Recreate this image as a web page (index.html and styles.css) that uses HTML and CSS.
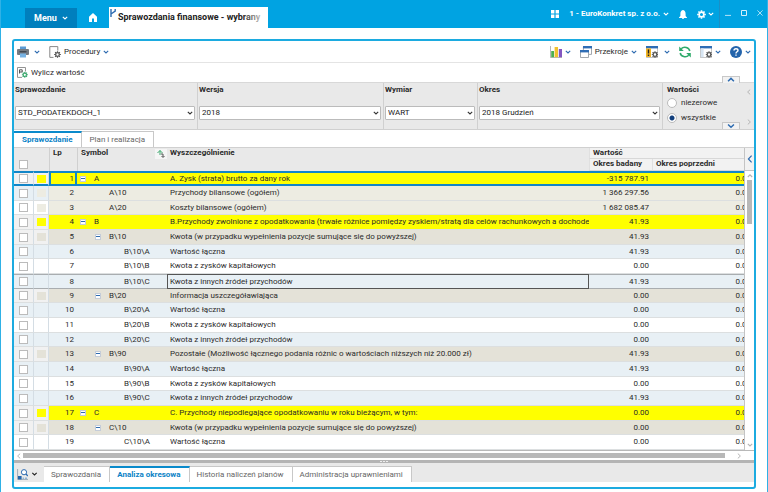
FILE: index.html
```html
<!DOCTYPE html>
<html lang="pl">
<head>
    <meta charset="UTF-8">
    <meta name="viewport" content="width=device-width, initial-scale=1.0">
    <title>Sprawozdania finansowe</title>
    <link rel="stylesheet" href="styles.css">
</head>
<body>
    <svg class="sprite" aria-hidden="true">
        <symbol id="down" viewBox="0 0 6 6"><path d="M0.8 1.8 L3 4 L5.2 1.8" fill="none" stroke="currentColor" stroke-width="1.1"/></symbol>
        <symbol id="up" viewBox="0 0 6 6"><path d="M0.8 4 L3 1.8 L5.2 4" fill="none" stroke="currentColor" stroke-width="1.1"/></symbol>
        <symbol id="left" viewBox="0 0 6 6"><path d="M4.2 0.6 L1.6 3 L4.2 5.4" fill="none" stroke="currentColor" stroke-width="1"/></symbol>
        <symbol id="right" viewBox="0 0 6 6"><path d="M1.8 0.6 L4.4 3 L1.8 5.4" fill="none" stroke="currentColor" stroke-width="1"/></symbol>
        <symbol id="gear" viewBox="0 0 10 10"><circle cx="5" cy="5" r="2.6" fill="none" stroke="currentColor" stroke-width="1.8"/><path d="M5 0.2V2M5 8V9.8M0.2 5H2M8 5H9.8M1.6 1.6L2.9 2.9M7.1 7.1L8.4 8.4M8.4 1.6L7.1 2.9M2.9 7.1L1.6 8.4" stroke="currentColor" stroke-width="1.7"/></symbol>
    </svg>

    <header class="topbar">
        <button class="menu">Menu <svg class="chev"><use href="#down"/></svg></button>
        <a class="home" href="#" aria-label="Start"><svg viewBox="0 0 8 9"><path d="M4 0L0 3.8V9H3V5.6H5V9H8V3.8Z" fill="#fff"/></svg></a>
        <a class="doc-tab" href="#">
            <svg class="pin" viewBox="0 0 6 8"><path d="M1 0V8M5.2 0V2.2L1 5" fill="none" stroke="#2d6bb0" stroke-width="1.4"/></svg>
            <span>Sprawozdania finansowe - wybrany</span>
        </a>
        <div class="account">
            <button aria-label="Aplikacje"><svg class="apps" viewBox="0 0 8 8"><path d="M0 0H3.4V3.4H0ZM4.6 0H8V3.4H4.6ZM0 4.6H3.4V8H0ZM4.6 4.6H8V8H4.6Z" fill="#fff"/></svg></button>
            <button class="company">1 - EuroKonkret sp. z o.o. <svg class="chev"><use href="#down"/></svg></button>
            <button aria-label="Powiadomienia"><svg class="bell" viewBox="0 0 8 9"><path d="M4 0C2 0.6 1.4 2 1.4 4V6L0 7.4V8H8V7.4L6.6 6V4C6.6 2 6 0.6 4 0ZM3 8.3H5V9H3Z" fill="#fff"/></svg></button>
            <button class="settings" aria-label="Ustawienia"><svg class="cog"><use href="#gear"/></svg><svg class="chev"><use href="#down"/></svg></button>
        </div>
        <div class="window-buttons">
            <button aria-label="Minimalizuj"><svg viewBox="0 0 6 6"><path d="M0 5.4H6" stroke="#b5e4f7"/></svg></button>
            <button aria-label="Maksymalizuj"><svg viewBox="0 0 6 6"><path d="M0.5 0.5H5.5V5.5H0.5Z" fill="none" stroke="#d5f0fb"/></svg></button>
            <button aria-label="Zamknij"><svg viewBox="0 0 6 6"><path d="M0.4 0.4L5.6 5.6M5.6 0.4L0.4 5.6" stroke="#b5e4f7" stroke-width="0.9"/></svg></button>
        </div>
    </header>

    <main class="panel">
        <div class="toolbar">
            <button class="print" aria-label="Drukuj">
                <svg class="icon" viewBox="0 0 12 12"><path d="M3 0.5H9V3H3Z" fill="#5d9bd3"/><rect y="3" width="12" height="6" rx="1" fill="#757b82"/><path d="M2.5 5H9.5V6.4H2.5Z" fill="#404850"/><path d="M3 7.5H9V11.5H3Z" fill="#77b2e2"/></svg>
                <svg class="chev"><use href="#down"/></svg>
            </button>
            <button class="procedures">
                <svg class="icon" viewBox="0 0 12 12"><path d="M4.5 11.4H0.8V0.6H8.8V4.6" fill="none" stroke="#888"/><use href="#gear" x="5" y="5" width="7" height="7" color="#555"/></svg>
                Procedury <svg class="chev"><use href="#down"/></svg>
            </button>
            <div class="toolbar-right">
                <button aria-label="Wykres">
                    <svg class="icon" viewBox="0 0 12 12"><path d="M0.5 0V11.5H12" fill="none" stroke="#999" stroke-width="0.7"/><path d="M1.2 5H4V11.2H1.2Z" fill="#4caf50"/><path d="M4.6 1H8V11.2H4.6Z" fill="#f2c230"/><path d="M8.8 3H12V11.2H8.8Z" fill="#8356c0"/></svg>
                    <svg class="chev"><use href="#down"/></svg>
                </button>
                <button>
                    <svg class="icon" viewBox="0 0 12 12"><path d="M3.4 4V0.8H11.5V8.4H9" fill="#fff" stroke="#8a929a" stroke-width="0.8"/><path d="M3 0H12V2.4H3Z" fill="#2f6db5"/><path d="M0.5 4.5H8.5V11.5H0.5Z" fill="#fff" stroke="#8a929a" stroke-width="0.8"/><path d="M0 4H9V6.4H0Z" fill="#2f6db5"/></svg>
                    Przekroje <svg class="chev"><use href="#down"/></svg>
                </button>
                <button class="alerts" aria-label="Alerty">
                    <svg class="icon" viewBox="0 0 12 12"><path d="M0.5 0.5H11.5V11.5H0.5Z" fill="#fff" stroke="#aaa" stroke-width="0.7"/><path d="M0 0H12V2.4H0Z" fill="#2f6db5"/><path d="M0 2.4H5V11H0Z" fill="#f0b323"/><path d="M2.5 3.5V7.5M2.5 8.5V10" stroke="#222" stroke-width="1.4"/><use href="#gear" x="5.5" y="5" width="7" height="7" color="#555"/></svg>
                    <svg class="chev"><use href="#down"/></svg>
                </button>
                <button aria-label="Odśwież">
                    <svg class="icon" viewBox="0 0 12 12"><path d="M10.8 5A5 4.6 0 0 0 2.2 2.8M1.2 7A5 4.6 0 0 0 9.8 9.2" fill="none" stroke="#2eaa6b" stroke-width="1.6"/><path d="M0.2 0.4V5H4.8ZM11.8 11.6V7H7.2Z" fill="#2eaa6b"/></svg>
                </button>
                <button aria-label="Widok">
                    <svg class="icon" viewBox="0 0 12 12"><path d="M0.5 0.5H11.5V11.5H0.5Z" fill="#fff" stroke="#aaa" stroke-width="0.7"/><path d="M0 0H12V2.4H0Z" fill="#2f6db5"/><path d="M0.8 2.4H3.6V11.2H0.8Z" fill="#d7e5f2"/><use href="#gear" x="5.5" y="5" width="7" height="7" color="#555"/></svg>
                    <svg class="chev"><use href="#down"/></svg>
                </button>
                <button aria-label="Pomoc">
                    <svg class="icon" viewBox="0 0 12 12"><circle cx="6" cy="6" r="6" fill="#2464ab"/><path d="M4 4.6C4 2 8 2.2 8 4.4C8 5.8 6 5.8 6 7.4M6 8.4V9.8" fill="none" stroke="#fff" stroke-width="1.4"/></svg>
                    <svg class="chev"><use href="#down"/></svg>
                </button>
            </div>
        </div>

        <div class="toolbar toolbar-sub">
            <button>
                <svg class="icon-s" viewBox="0 0 11 11"><path d="M5 10.4H0.5V0.5H8.5V4.5" fill="#fff" stroke="#888" stroke-width="0.9"/><path d="M2.5 6.5V2.8H5.2V5H2.5" fill="none" stroke="#555"/><use href="#gear" x="4.6" y="4.6" width="6.4" height="6.4" color="#3aa76d"/></svg>
                Wylicz wartość
            </button>
        </div>

        <form class="filters">
            <div class="field">
                <label for="report">Sprawozdanie</label>
                <div class="select"><select id="report"><option>STD_PODATEKDOCH_1</option></select><svg class="chev"><use href="#down"/></svg></div>
            </div>
            <div class="field">
                <label for="version">Wersja</label>
                <div class="select"><select id="version"><option>2018</option></select><svg class="chev"><use href="#down"/></svg></div>
            </div>
            <div class="field">
                <label for="dimension">Wymiar</label>
                <div class="select"><select id="dimension"><option>WART</option></select><svg class="chev"><use href="#down"/></svg></div>
            </div>
            <div class="field">
                <label for="period">Okres</label>
                <div class="select"><select id="period"><option>2018 Grudzień</option></select><svg class="chev"><use href="#down"/></svg></div>
            </div>
            <fieldset class="field values">
                <legend>Wartości</legend>
                <label><input type="radio" name="values"> niezerowe</label>
                <label><input type="radio" name="values" checked> wszystkie</label>
            </fieldset>
            <div class="filter-nav">
                <svg class="arrow"><use href="#left"/></svg>
                <svg class="arrow"><use href="#right"/></svg>
            </div>
            <button type="button" class="fold fold-up" aria-label="Zwiń"><svg><use href="#up"/></svg></button>
            <button type="button" class="fold fold-down" aria-label="Rozwiń"><svg><use href="#down"/></svg></button>
        </form>

        <nav class="tabs">
            <a class="tab active" href="#">Sprawozdanie</a>
            <a class="tab" href="#">Plan i realizacja</a>
        </nav>

        <div class="grid">
            <div class="grid-view">
                <table>
                    <colgroup>
                        <col class="c-check"><col class="c-mark"><col class="c-lp"><col class="c-symbol"><col class="c-name"><col class="c-now"><col class="c-prev">
                    </colgroup>
                    <thead>
                        <tr>
                            <th rowspan="2" class="low"><input type="checkbox" aria-label="Zaznacz wszystkie"></th>
                            <th rowspan="2"></th>
                            <th rowspan="2" class="line">Lp</th>
                            <th rowspan="2" class="line symbol-head">Symbol
                                <button class="sort" aria-label="Sortuj"><svg viewBox="0 0 8 8"><path d="M0.5 3L3 0.5L5.5 3M3 0.5V5" fill="none" stroke="#3aa76d"/><path d="M4 4H6V7M4.5 6L6 7.5L7.5 6" fill="none" stroke="#555"/></svg></button>
                            </th>
                            <th rowspan="2">Wyszczególnienie</th>
                            <th colspan="2" class="group">Wartość</th>
                        </tr>
                        <tr>
                            <th class="group">Okres badany</th>
                            <th class="group">Okres poprzedni</th>
                        </tr>
                    </thead>
                    <tbody id="rows"></tbody>
                </table>
            </div>
            <div class="gutter">
                <button class="expand" aria-label="Pokaż panel"><svg viewBox="0 0 6 8"><path d="M4.6 0.6L1.4 4L4.6 7.4" fill="none" stroke="#2d6bb0" stroke-width="1.2"/></svg></button>
                <div class="vscroll">
                    <svg class="arrow"><use href="#up"/></svg>
                    <div class="vthumb"></div>
                    <svg class="arrow"><use href="#down"/></svg>
                </div>
            </div>
        </div>
        <div class="hscroll">
            <svg class="arrow"><use href="#left"/></svg>
            <div class="hthumb"></div>
            <svg class="arrow"><use href="#right"/></svg>
        </div>
        <div class="splitter"><i></i><i></i><i></i></div>

        <nav class="sheets">
            <button class="find" aria-label="Znajdź">
                <svg class="icon-s" viewBox="0 0 11 11"><path d="M0.6 0V10.4H11" fill="none" stroke="#8a9aa8" stroke-width="0.8"/><path d="M1 7H4.6V10.4H1Z" fill="#2464ab"/><path d="M5.6 8.4H7V10H5.6ZM8 8.4H10V10H8Z" fill="#8fb3d6"/><circle cx="7" cy="3.2" r="2.6" fill="#fff" stroke="#2d6bb0"/><path d="M9 5L10.8 7" stroke="#2d6bb0" stroke-width="1.2"/></svg>
                <svg class="chev"><use href="#down"/></svg>
            </button>
            <a class="tab" href="#">Sprawozdania</a>
            <a class="tab active" href="#">Analiza okresowa</a>
            <a class="tab" href="#">Historia naliczeń planów</a>
            <a class="tab" href="#">Administracja uprawnieniami</a>
        </nav>
    </main>
    <script src="script.js"></script>
</body>
</html>
```
FILE: styles.css
```css
* {
    box-sizing: border-box;
}
body {
    margin: 0;
    height: 100vh;
    display: flex;
    flex-direction: column;
    overflow: hidden;
    font: 8px/10px Roboto, sans-serif;
    color: #2b2b2b;
    background: #fff;
    border-left: 1px solid #2fb1e6;
    border-right: 1px solid #2fb1e6;
}
button {
    display: flex;
    align-items: center;
    padding: 0;
    border: 0;
    background: none;
    font: inherit;
    color: inherit;
    cursor: pointer;
}
a {
    color: inherit;
    text-decoration: none;
}
.sprite {
    position: absolute;
    width: 0;
    height: 0;
}
.chev {
    width: 6px;
    height: 6px;
    color: #2d6bb0;
}
.arrow {
    width: 6px;
    height: 6px;
    color: #b5b5b5;
}
.icon {
    width: 12px;
    height: 12px;
}
.icon-s {
    width: 11px;
    height: 11px;
}

/* top bar */
.topbar {
    display: flex;
    flex: none;
    height: 28px;
    padding-left: 24px;
    background: #00a3e2;
    color: #fff;
    font-weight: bold;
}
.topbar .chev {
    color: #fff;
}
.menu {
    width: 52px;
    margin-top: 8px;
    justify-content: center;
    gap: 5px;
    background: #007fbd;
    font-size: 9px;
}
.home {
    width: 32px;
    padding: 13px 0 0 12px;
}
.home svg {
    display: block;
    width: 8px;
    height: 9px;
}
.doc-tab {
    position: relative;
    width: 159px;
    margin-top: 7px;
    padding: 5px 0 0 9px;
    background: #fff;
    color: #222;
    font-size: 9px;
}
.doc-tab span {
    display: block;
    white-space: nowrap;
}
.doc-tab span::after {
    content: "";
    position: absolute;
    top: 4px;
    left: 134px;
    width: 24px;
    height: 12px;
    background: linear-gradient(to right, rgba(255, 255, 255, 0), #fff);
}
.pin {
    position: absolute;
    top: 2px;
    left: 1px;
    width: 6px;
    height: 8px;
}
.account {
    display: flex;
    margin-left: auto;
    padding-right: 5px;
    gap: 10px;
}
.company {
    gap: 3px;
}
.apps {
    width: 8px;
    height: 8px;
}
.bell {
    width: 8px;
    height: 9px;
}
.settings {
    gap: 2px;
}
.cog {
    width: 9px;
    height: 9px;
}
.window-buttons {
    display: flex;
    gap: 10px;
    padding: 0 4px 2px 5px;
    border-left: 1px solid #1b8fc6;
}
.window-buttons svg {
    width: 6px;
    height: 6px;
}

/* panel */
.panel {
    flex: 1;
    min-height: 0;
    display: flex;
    flex-direction: column;
    margin: 11px 11px 3px;
    padding-bottom: 5px;
    border: 2px solid #1cabe0;
    border-radius: 3px;
}
.toolbar {
    display: flex;
    flex: none;
    align-items: center;
    height: 22px;
    padding: 0 3px;
    border-bottom: 1px solid #e4e4e4;
}
.toolbar button {
    gap: 3px;
}
.toolbar .print {
    gap: 5px;
    margin-right: 9px;
}
.toolbar-right {
    display: flex;
    margin-left: auto;
    gap: 9px;
}
.toolbar .alerts {
    gap: 6px;
}
.toolbar-sub {
    height: 19px;
    border-bottom: 0;
}

/* filters */
.filters {
    position: relative;
    display: grid;
    grid-template-columns: 184fr 186fr 94fr 185fr 80px 11px;
    flex: none;
    height: 48px;
    background: #e9e9e9;
    border-top: 1px solid #d8d8d8;
    border-bottom: 1px solid #d0d0d0;
}
.field {
    min-width: 0;
    margin: 0;
    padding: 2px 2px 0 1px;
    border: 0;
    border-right: 1px solid #d0d0d0;
}
.field > label,
.field legend {
    display: block;
    padding: 0;
    font-weight: bold;
}
.field > .select {
    margin-top: 11px;
}
.select {
    position: relative;
}
.select select {
    width: 100%;
    height: 14px;
    padding: 0 12px 0 2px;
    border: 1px solid #bbb;
    border-radius: 1px;
    background: #fff;
    color: #222;
    font: inherit;
    appearance: none;
}
.select .chev {
    position: absolute;
    top: 4px;
    right: 2px;
    color: #333;
    pointer-events: none;
}
.field.values {
    padding: 0 0 0 4px;
    border-right: 0;
}
.field.values legend {
    padding-top: 2px;
}
.field.values label {
    display: flex;
    align-items: center;
    gap: 4px;
    height: 15px;
    font-weight: normal;
}
input[type="radio"] {
    appearance: none;
    width: 10px;
    height: 10px;
    margin: 0;
    border: 1px solid #bbb;
    border-radius: 50%;
    background: #fff;
}
input[type="radio"]:checked {
    background: radial-gradient(circle, #123f7c 2px, #fff 3px);
}
.filter-nav {
    display: flex;
    flex-direction: column;
    justify-content: space-between;
    padding: 6px 0 4px 3px;
}
.fold {
    position: absolute;
    right: 14px;
    justify-content: center;
    width: 18px;
    height: 7px;
    border: 1px solid #c8c8c8;
    border-bottom: 0;
    background: #f2f2f2;
}
.fold svg {
    width: 8px;
    height: 8px;
    color: #2d6bb0;
}
.fold-up {
    top: -7px;
}
.fold-down {
    bottom: 0;
}

/* tabs */
.tabs {
    display: flex;
    flex: none;
    height: 17px;
    padding-top: 1px;
}
.tab {
    padding: 3px 8px 0;
    border: 1px solid #c8c8c8;
    border-left: 0;
    border-bottom: 0;
    background: #fff;
    color: #666;
}
.tab.active {
    padding-top: 2px;
    border-top: 2px solid #0a8acb;
    color: #0a82c6;
    font-weight: bold;
}

/* grid */
.grid {
    flex: 1;
    display: flex;
    min-height: 0;
    border-top: 1px solid #d0d0d0;
    border-bottom: 1px solid #b8b8b8;
}
.grid-view {
    flex: 1;
    overflow: hidden;
    min-width: 0;
    background: #e8f0f5;
}
table {
    width: calc(100% + 14px);
    table-layout: fixed;
    border-collapse: separate;
    border-spacing: 0;
}
.c-check { width: 20px; }
.c-mark { width: 15px; }
.c-lp { width: 28px; }
.c-symbol { width: 90px; }
.c-now { width: 63px; }
.c-prev { width: 106px; }
th {
    height: 11px;
    padding: 0 3px;
    background: #e9e9e9;
    text-align: left;
    vertical-align: top;
}
thead tr:last-child th {
    height: 12px;
}
th.line {
    border-left: 1px solid #d0d0d0;
}
th.group {
    background: #f2f2f2;
    border-left: 1px solid #e0e0e0;
    border-bottom: 1px solid #d8d8d8;
}
th.low {
    padding-bottom: 2px;
    vertical-align: bottom;
}
.symbol-head {
    position: relative;
}
.sort {
    position: absolute;
    right: 0;
    top: 1px;
    width: 12px;
    height: 10px;
    justify-content: center;
    background: #f5f5f5;
}
.sort svg {
    width: 8px;
    height: 8px;
}
input[type="checkbox"] {
    appearance: none;
    display: block;
    width: 9px;
    height: 9px;
    margin: 0 0 0 2px;
    border: 1px solid #bbb;
    background: #fff;
}
td {
    height: 15px;
    padding: 0 3px;
    border-bottom: 1px solid #dcdfe0;
    white-space: nowrap;
    overflow: hidden;
}
tbody tr:nth-child(3n) td {
    height: 14px;
}
tr.odd {
    background: #fff;
}
tr.even {
    background: #e8f0f5;
}
td:nth-child(1),
td:nth-child(2) {
    border-right: 1px solid #d4dde4;
}
tr.head td {
    background: #ff0;
}
tr.sub td {
    background: #e4e2d8;
}
tr.head td:nth-child(-n+2),
tr.sub td:nth-child(-n+2) {
    background: #f1f1f1;
}
tr.leaf td:nth-child(n+3) {
    background: #edece2;
}
.num {
    text-align: right;
}
td.num.prev {
    padding-right: 7px;
}
.mark {
    display: block;
    width: 9px;
    height: 8px;
}
.head .mark { background: #ff0; }
.sub .mark { background: #e4e2d8; }
.leaf .mark { background: #edece2; }
.symbol {
    display: flex;
    align-items: center;
}
.box {
    position: relative;
    flex: none;
    width: 6px;
    height: 6px;
    margin-right: 8px;
    border: 1px solid #c4ccd8;
    background: #fff;
}
.box::after {
    content: "";
    position: absolute;
    top: 1px;
    left: 0;
    width: 4px;
    height: 1px;
    background: #2d6bb0;
}
.l1 { padding-left: 15px; }
.l2 { padding-left: 29px; }
.l3 { padding-left: 44px; }
.l1.open { padding-left: 0; }
.l2.open { padding-left: 15px; }
tr.current td {
    border-top: 2px solid #1286c8;
    border-bottom: 2px solid #1286c8;
}
tr.current td:nth-child(3) {
    outline: 2px solid #1286c8;
    outline-offset: -2px;
}
tr.focus td {
    border-top: 1px solid #a9adb0;
    border-bottom: 1px solid #a9adb0;
}
tr.focus td:nth-child(5) {
    outline: 1px solid #555;
    outline-offset: -1px;
}

.gutter {
    display: flex;
    flex-direction: column;
    width: 10px;
    border-left: 1px solid #c4c4c4;
}
.expand {
    flex: none;
    justify-content: center;
    height: 23px;
    background: #f2f2f2;
    border-bottom: 1px solid #c4c4c4;
}
.expand svg {
    width: 6px;
    height: 8px;
}
.vscroll {
    flex: 1;
    display: flex;
    flex-direction: column;
    padding: 2px 1px;
    align-items: center;
}
.vscroll .arrow:last-child {
    margin-top: auto;
}
.vthumb {
    width: 5px;
    height: 44px;
    margin-top: 1px;
    background: #b8b8b8;
}
.hscroll {
    display: flex;
    flex: none;
    align-items: center;
    height: 9px;
    padding: 0 12px 0 2px;
}
.hthumb {
    flex: 1;
    height: 5px;
    margin: 0 11px 0 1px;
    background: #b8b8b8;
}
.splitter {
    display: flex;
    flex: none;
    align-items: center;
    justify-content: center;
    gap: 1px;
    height: 3px;
    background: #b4b4b4;
}
.splitter i {
    width: 2px;
    height: 1px;
    background: #eee;
}

/* bottom tabs */
.sheets {
    display: flex;
    flex: none;
    height: 19px;
    padding-top: 3px;
    background: #e9e9e9;
}
.sheets .tab {
    padding-left: 7px;
}
.find {
    width: 30px;
    padding-left: 3px;
    gap: 3px;
}
.find .chev {
    width: 7px;
    color: #222;
}
```
FILE: script.js
```js
// [kind, level, symbol, name, value]
const data = [
    ["head", 1, "A", "A. Zysk (strata) brutto za dany rok", "-315 787.91"],
    ["leaf", 2, "A\\10", "Przychody bilansowe (ogółem)", "1 366 297.56"],
    ["leaf", 2, "A\\20", "Koszty bilansowe (ogółem)", "1 682 085.47"],
    ["head", 1, "B", "B.Przychody zwolnione z opodatkowania (trwałe różnice pomiędzy zyskiem/stratą dla celów rachunkowych a dochodem)", "41.93"],
    ["sub", 2, "B\\10", "Kwota (w przypadku wypełnienia pozycje sumujące się do powyższej)", "41.93"],
    ["", 3, "B\\10\\A", "Wartość łączna", "41.93"],
    ["", 3, "B\\10\\B", "Kwota z zysków kapitałowych", "0.00"],
    ["", 3, "B\\10\\C", "Kwota z innych źródeł przychodów", "41.93"],
    ["sub", 2, "B\\20", "Informacja uszczegóławiająca", "0.00"],
    ["", 3, "B\\20\\A", "Wartość łączna", "0.00"],
    ["", 3, "B\\20\\B", "Kwota z zysków kapitałowych", "0.00"],
    ["", 3, "B\\20\\C", "Kwota z innych źródeł przychodów", "0.00"],
    ["sub", 2, "B\\90", "Pozostałe (Możliwość łącznego podania różnic o wartościach niższych niż 20.000 zł)", "41.93"],
    ["", 3, "B\\90\\A", "Wartość łączna", "41.93"],
    ["", 3, "B\\90\\B", "Kwota z zysków kapitałowych", "0.00"],
    ["", 3, "B\\90\\C", "Kwota z innych źródeł przychodów", "41.93"],
    ["head", 1, "C", "C. Przychody niepodlegające opodatkowaniu w roku bieżącym, w tym:", "0.00"],
    ["sub", 2, "C\\10", "Kwota (w przypadku wypełnienia pozycje sumujące się do powyższej)", "0.00"],
    ["", 3, "C\\10\\A", "Wartość łączna", "0.00"]
];

let html = "";
data.forEach(([kind, level, symbol, name, value], i) => {
    const open = kind === "head" || kind === "sub";
    const state = i === 0 ? "current" : i === 7 ? "focus" : "";
    html += `<tr class="${kind} ${i % 2 ? "even" : "odd"} ${state}">
        <td><input type="checkbox" aria-label="Wiersz ${i + 1}"></td>
        <td>${kind ? '<span class="mark"></span>' : ""}</td>
        <td class="num">${i + 1}</td>
        <td><div class="symbol l${level} ${open ? "open" : ""}">${open ? '<span class="box"></span>' : ""}${symbol}</div></td>
        <td>${name}</td>
        <td class="num">${value}</td>
        <td class="num prev">0.00</td>
    </tr>`;
});
document.getElementById("rows").innerHTML = html;
```
